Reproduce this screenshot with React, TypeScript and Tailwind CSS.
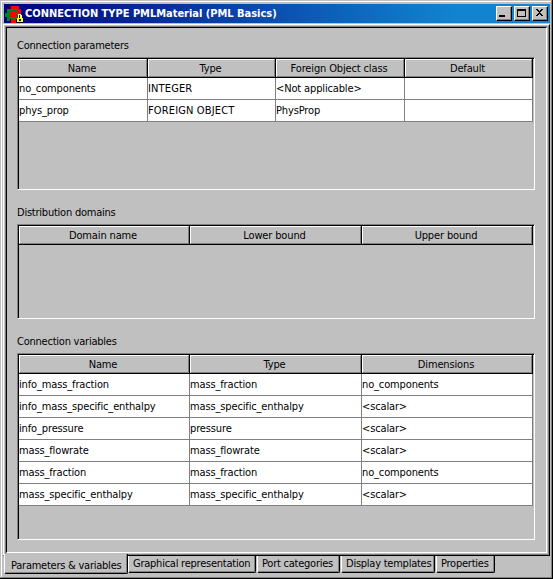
import type { ReactNode } from "react";

function Cell({ text }: { text: string }) {
  const caps = text !== "" && text === text.toUpperCase();
  return <span className={caps ? "tracking-[0.14px]" : ""}>{text}</span>;
}

function Panel({ title, gap, height, widths, heads, rows }: { title: string; gap: string; height: string; widths: string[]; heads: string[]; rows: string[][] }) {
  return (
    <section className={gap}>
      <h2 className="h-[19px] leading-[16px] tracking-[-0.23px]">{title}</h2>
      <div className={"w-[518px] border border-t-[#808080] border-l-[#808080] border-r-white border-b-white " + height}>
        <div className="h-full border-t border-l border-black">
          <div className="flex h-[19px]">
            {heads.map((head, i) => (
              <div key={head} className={widths[i] + " h-[19px] shrink-0 border-r border-b border-black"}>
                <div className="h-full border border-t-white border-l-white border-r-[#808080] border-b-[#808080] pr-[2px] text-center leading-[17px]">{head}</div>
              </div>
            ))}
          </div>
          {rows.map((row, r) => (
            <div key={r} className="flex h-[22px]">
              {row.map((cell, i) => (
                <div key={i} className={widths[i] + " shrink-0 border-r border-b border-[#808080] bg-white pt-px leading-[20px]"}><Cell text={cell} /></div>
              ))}
            </div>
          ))}
        </div>
      </div>
    </section>
  );
}

function WinButton({ children }: { children: ReactNode }) {
  return (
    <button className="h-[15px] w-[16px] border border-t-white border-l-white border-r-black border-b-black bg-[#c0c0c0]">
      <span className="block h-full border-r border-b border-[#808080]">
        <svg width="13" height="12" viewBox="0 0 13 12" shapeRendering="crispEdges" className="block">{children}</svg>
      </span>
    </button>
  );
}

const quarter = ["w-[129px]", "w-[128px]", "w-[129px]", "w-[128px]"];
const third = ["w-[171px]", "w-[172px]", "w-[171px]"];
const tabs: [string, string][] = [
  ["Graphical representation", "w-[128px]"],
  ["Port categories", "w-[83px]"],
  ["Display templates", "w-[94px]"],
  ["Properties", "w-[59px]"],
];

export default function App() {
  return (
    <main className="h-[579px] w-[553px] overflow-hidden border-r border-b border-black bg-[#c0c0c0] font-['DejaVu_Sans_Condensed','DejaVu_Sans',sans-serif] text-[11px] tracking-[-0.14px] whitespace-nowrap text-black">
      <div className="h-full border-t border-l border-r border-b border-t-[#c0c0c0] border-l-[#c0c0c0] border-r-[#808080] border-b-[#808080]">
        <div className="h-full border-t border-l border-white pt-[2px]">
          <header className="ml-[2px] flex h-[19px] w-[546px] items-center bg-[linear-gradient(90deg,#000080_0px,#1084d0_450px)] text-white">
            <svg width="18" height="18" viewBox="0 0 18 18" shapeRendering="crispEdges" className="ml-px block shrink-0">
              <path fill="#ff0000" d="M6 1h8v3h2v8h-3v2h-2v4H6z" />
              <path fill="#008020" d="M2 4h10v10H5v2H2v-4H0V8h2z" />
              <path fill="#ff0000" d="M5 7h6v5H5z" />
              <path fill="#ffff80" d="M13 9h3v1h1v3h1v5h-6v-5h1z" />
              <path fill="#ffff00" d="M12 13h6v4h-6z" />
              <path fill="#000" d="M14 10h1v3h-1zM14 14h2v2h-2zM12 17h6v1h-6z" />
            </svg>
            <h1 className="ml-[2px] grow text-[11px] leading-[18px] font-bold tracking-[-0.02px]">CONNECTION TYPE PMLMaterial (PML Basics)</h1>
            <div className="mr-[2px] flex gap-[2px]">
              <WinButton><path d="M2 8h6v2H2z" /></WinButton>
              <WinButton><path fillRule="evenodd" d="M2 2h9v8H2zM3 4v5h7V4z" /></WinButton>
              <WinButton><path d="M3 2h2v1h1v1h1V3h1V2h2v1H9v1H8v1H7v1h1v1h1v1h1v1H8V8H7V7H6v1H5v1H3V8h1V7h1V6h1V5H5V4H4V3H3z" /></WinButton>
            </div>
          </header>
          <div className="mt-px ml-px h-[532px] w-[547px] border-t border-l border-t-white border-l-white border-r border-b border-r-black border-b-black">
            <div className="h-full border-t border-l border-[#c0c0c0] border-r border-b border-r-[#808080] border-b-[#808080]">
              <div className="h-full border-t border-l border-t-[#808080] border-l-[#808080] border-r border-b border-r-[#c0c0c0] border-b-[#c0c0c0]">
                <div className="h-full border-t border-l border-t-black border-l-black border-r border-b border-r-white border-b-white pl-[10px]">
                  <Panel title="Connection parameters" gap="pt-[10px]" height="h-[133px]" widths={quarter}
                    heads={["Name", "Type", "Foreign Object class", "Default"]}
                    rows={[["no_components", "INTEGER", "<Not applicable>", ""], ["phys_prop", "FOREIGN OBJECT", "PhysProp", ""]]} />
                  <Panel title="Distribution domains" gap="pt-[15px]" height="h-[95px]" widths={third}
                    heads={["Domain name", "Lower bound", "Upper bound"]} rows={[]} />
                  <Panel title="Connection variables" gap="pt-[15px]" height="h-[187px]" widths={third}
                    heads={["Name", "Type", "Dimensions"]}
                    rows={[
                      ["info_mass_fraction", "mass_fraction", "no_components"],
                      ["info_mass_specific_enthalpy", "mass_specific_enthalpy", "<scalar>"],
                      ["info_pressure", "pressure", "<scalar>"],
                      ["mass_flowrate", "mass_flowrate", "<scalar>"],
                      ["mass_fraction", "mass_fraction", "no_components"],
                      ["mass_specific_enthalpy", "mass_specific_enthalpy", "<scalar>"],
                    ]} />
                </div>
              </div>
            </div>
          </div>
          <nav className="-mt-[2px] ml-[2px] flex items-start tracking-[-0.24px]">
            <div className="z-10 h-[20px] w-[124px] rounded-b-[2px] border-r border-b border-l border-r-black border-b-black border-l-white bg-[#c0c0c0]">
              <div className="h-full border-r border-b border-[#808080] pt-[2px] pl-[6px] leading-[19px]">Parameters &amp; variables</div>
            </div>
            <div className="mt-[2px] flex gap-px">
              {tabs.map(([label, width]) => (
                <div key={label} className={width + " h-[17px] rounded-b-[2px] border-r border-b border-l border-r-black border-b-black border-l-white"}>
                  <div className="h-full border-r border-b border-[#808080] pl-[4px] leading-[15px]">{label}</div>
                </div>
              ))}
            </div>
          </nav>
        </div>
      </div>
    </main>
  );
}
